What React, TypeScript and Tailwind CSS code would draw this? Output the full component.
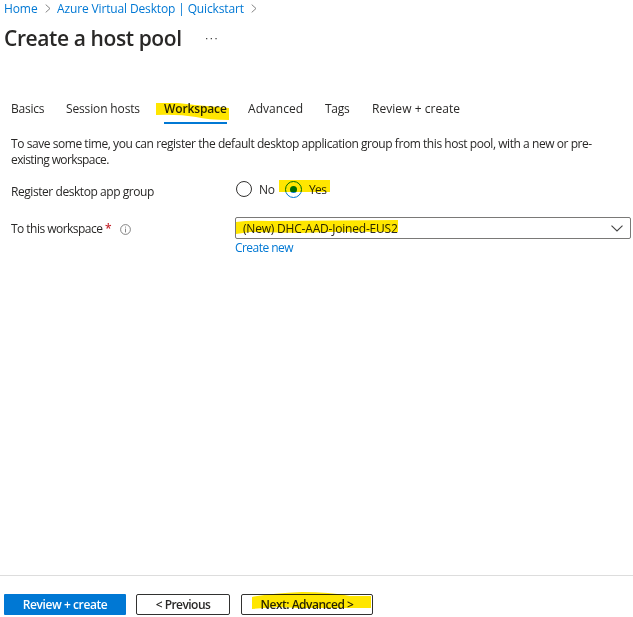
import type { ReactNode } from "react";

function Marker({ className, d, w, h }: { className: string; d: string; w: number; h: number }) {
  return (
    <svg
      aria-hidden="true"
      className={"pointer-events-none absolute mix-blend-multiply " + className}
      width={w}
      height={h}
      viewBox={`0 0 ${w} ${h}`}
    >
      <path d={d} fill="#ffe600" />
    </svg>
  );
}

function Crumb({ className }: { className: string }) {
  return (
    <svg aria-hidden="true" className={className} width="6" height="9" viewBox="0 0 6 9" fill="none" stroke="#777" strokeWidth="0.9">
      <path d="M.7.6 5 4.5.7 8.4" />
    </svg>
  );
}

function Tab({ className, children }: { className: string; children: ReactNode }) {
  return <button className={"h-4 shrink-0 text-left " + className}>{children}</button>;
}

export default function App() {
  return (
    <div className="flex h-[617px] w-[633px] flex-col overflow-hidden whitespace-nowrap bg-white font-['Open_Sans','Noto_Sans',sans-serif] text-[12px] leading-4 text-[#292827]">
      <nav className="flex h-[17px] shrink-0 items-start pl-1 pt-px text-[#0078d4]">
        <a className="w-[41px] tracking-[-0.1px]">Home</a>
        <Crumb className="mt-[3px]" />
        <a className="ml-1.5 w-[194px] tracking-[-0.14px]">Azure Virtual Desktop | Quickstart</a>
        <Crumb className="mt-[3px]" />
      </nav>

      <header className="flex h-[44px] shrink-0 items-center pl-1">
        <h1 className="-mt-0.5 w-[202px] text-[21px] font-semibold leading-7 tracking-[-0.4px]">Create a host pool</h1>
        <svg aria-label="More" width="11" height="2" viewBox="0 0 11 2" fill="#444">
          <path d="M0 0h1.3v1.3H0zM4.7 0H6v1.3H4.7zM9.4 0h1.3v1.3H9.4z" />
        </svg>
      </header>

      <div className="mt-[40px] flex h-[23px] shrink-0 pl-[11px]">
        <Tab className="w-[55px] tracking-[-0.25px]">Basics</Tab>
        <Tab className="w-[98px] tracking-[-0.14px]">Session hosts</Tab>
        <div className="relative mr-[21px] w-[63px] border-b-2 border-[#0078d4] font-semibold tracking-[-0.13px]">
          Workspace
          <Marker className="-left-2 top-[2px]" w={73} h={18} d="M0 0H22L39 2 73 5V17Q52 17 40 14 22 11 0 12Z" />
        </div>
        <Tab className="w-[77px] tracking-[0.05px]">Advanced</Tab>
        <Tab className="w-[47px] tracking-[-0.3px]">Tags</Tab>
        <Tab className="tracking-[0.05px]">Review + create</Tab>
      </div>

      <p className="mt-[12px] shrink-0 pl-[11px] tracking-[-0.44px]">
        To save some time, you can register the default desktop application group from this host pool, with a new or pre-
        <br />
        <span className="tracking-[-0.6px]">existing workspace.</span>
      </p>

      <div className="mt-[11px] flex h-[24px] shrink-0 pl-[11px]">
        <span className="mt-[5px] w-[224px] tracking-[-0.44px]">Register desktop app group</span>
        <div className="relative flex h-5 items-start">
          <span className="mt-[2px] ml-px size-4 rounded-full border border-[#323130]" />
          <span className="ml-[7px] mt-[3px] w-[26px] tracking-[-0.3px]">No</span>
          <span className="mt-[2px] flex size-[17px] items-center justify-center rounded-full border border-[#0078d4]">
            <span className="size-[7px] rounded-full bg-[#0078d4]" />
          </span>
          <span className="ml-[7px] mt-[3px] tracking-[-0.6px]">Yes</span>
          <Marker className="left-[44px] top-[1px]" w={51} h={13} d="M0 0H51V12H28L0 12Z" />
        </div>
      </div>

      <div className="mt-[14px] flex shrink-0 pl-[11px]">
        <div className="flex h-[22px] w-[224px] items-center pt-[2px]">
          <span className="w-[90px] tracking-[-0.53px]">To this workspace</span>
          <span className="w-[19px] pl-1 font-semibold text-[#c4262e]">*</span>
          <svg aria-hidden="true" width="11" height="11" viewBox="0 0 11 11" fill="none" stroke="#666" strokeWidth=".8">
            <circle cx="5.5" cy="5.5" r="4.9" />
            <path d="M5.5 4.6V8.4M5.5 2.6V3.6" />
          </svg>
        </div>
        <div>
          <div className="relative flex h-[22px] w-[396px] items-center justify-between rounded-[2px] border border-[#7a7977] pl-[7px] pr-[7px]">
            <span className="mt-px tracking-[-0.2px]">(New) DHC-AAD-Joined-EUS2</span>
            <svg aria-hidden="true" width="12" height="7" viewBox="0 0 12 7" fill="none" stroke="#444" strokeWidth="1.1">
              <path d="M.5.6 6 6 11.5.6" />
            </svg>
            <Marker className="left-0 top-[2px]" w={162} h={15} d="M0 2Q14 0 34 1L162 0V12Q100 11 65 13L14 12 0 14Z" />
          </div>
          <a className="mt-px block tracking-[-0.55px] text-[#0078d4]">Create new</a>
        </div>
      </div>

      <footer className="mt-auto flex h-[42px] shrink-0 border-t border-[#dddddd] pl-1 pt-[18px] font-semibold">
        <button className="h-[21px] w-[122px] rounded-[1px] bg-[#0078d4] tracking-[-0.42px] text-white">Review + create</button>
        <button className="ml-2.5 h-[21px] w-[94px] rounded-[2px] border border-[#323130] tracking-[-0.55px]">&lt; Previous</button>
        <button className="relative ml-[11px] h-[21px] w-[132px] rounded-[2px] border border-[#323130] tracking-[-0.5px]">
          Next: Advanced &gt;
          <Marker className="-top-[3px] left-[10px]" w={119} h={18} d="M0 5Q20 1 50 0 78 0 98 4H119V16H80L46 16 25 15 0 17Z" />
        </button>
      </footer>
    </div>
  );
}
